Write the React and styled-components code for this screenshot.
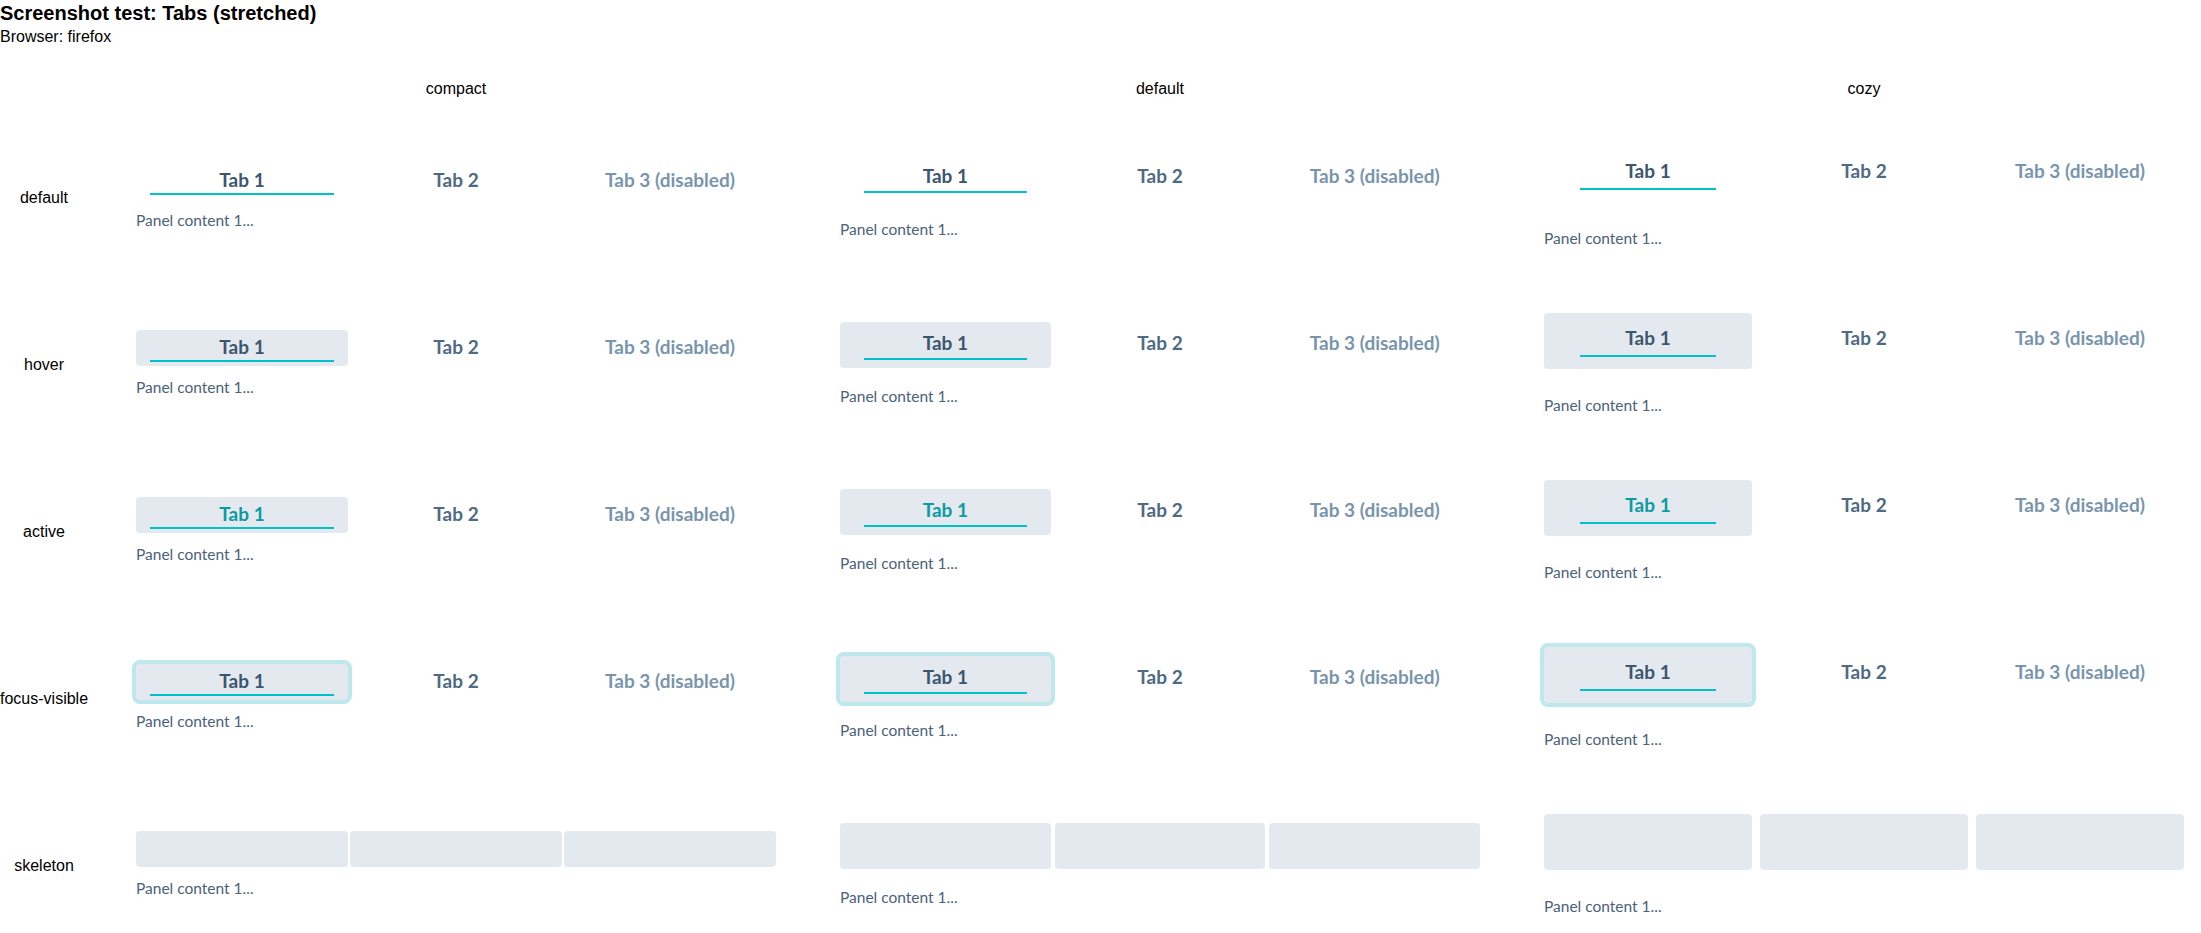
import React from "react";
import styled, { createGlobalStyle, css } from "styled-components";

const GlobalStyle = createGlobalStyle`
  html, body { margin: 0; padding: 0; background: #ffffff; }
  body { font-family: "Liberation Sans", Arial, sans-serif; color: #000000; }
`;

const DENSITY = {
  compact: { gap: 2, padX: 14, padTop: 5, lineGap: 1, padBottom: 4, panelGap: 11 },
  default: { gap: 4, padX: 24, padTop: 9, lineGap: 3, padBottom: 8, panelGap: 18 },
  cozy: { gap: 8, padX: 36, padTop: 13, lineGap: 5, padBottom: 12, panelGap: 26 },
};

const tabHeight = (d) => d.padTop + 24 + d.lineGap + 2 + d.padBottom;

const Page = styled.div`
  width: 2201px;
`;

const Title = styled.h1`
  margin: 0;
  padding-top: 2px;
  font-size: 20px;
  line-height: 23px;
  font-weight: 700;
`;

const Subtitle = styled.p`
  margin: 3px 0 0;
  font-size: 16px;
  line-height: 18px;
`;

const Matrix = styled.div`
  display: grid;
  grid-template-columns: 88px repeat(3, 656px);
  grid-template-rows: 67px repeat(5, 167px);
  column-gap: 48px;
`;

const ColumnHeading = styled.div`
  align-self: end;
  width: 640px;
  padding-bottom: 15px;
  font-size: 16px;
  line-height: 18px;
  text-align: center;
`;

const RowLabel = styled.div`
  align-self: center;
  margin-top: 3px;
  font-size: 16px;
  line-height: 18px;
  text-align: center;
  white-space: nowrap;
`;

const Cell = styled.div`
  align-self: center;
  width: 640px;
  display: flex;
  flex-direction: column;
`;

const TabList = styled.div`
  display: flex;
  gap: ${(p) => p.$d.gap}px;
`;

const Tab = styled.div`
  flex: 1 1 0;
  min-width: 0;
  box-sizing: border-box;
  display: flex;
  flex-direction: column;
  padding: ${(p) => p.$d.padTop}px ${(p) => p.$d.padX}px ${(p) => p.$d.padBottom}px;
  border-radius: 4px;
  font-family: Lato, "Noto Sans", sans-serif;
  font-weight: 700;
  font-size: 19px;
  line-height: 24px;
  text-align: center;
  color: ${(p) => (p.$disabled ? "#7995ad" : p.$selected ? "#3c566e" : "#4f6a83")};
  ${(p) =>
    p.$selected &&
    (p.$state === "hover" || p.$state === "active" || p.$state === "focus") &&
    css`
      background: #e3e9ef;
    `}
  ${(p) =>
    p.$selected &&
    p.$state === "active" &&
    css`
      color: #0b9ba1;
    `}
  ${(p) =>
    p.$selected &&
    p.$state === "focus" &&
    css`
      box-shadow: 0 0 0 4px #bde9ec;
    `}
`;

const TabLabel = styled.span`
  display: block;
  white-space: nowrap;
`;

const Indicator = styled.span`
  display: block;
  height: 2px;
  margin-top: ${(p) => p.$d.lineGap}px;
  background: ${(p) => (p.$on ? "#00c1cc" : "transparent")};
`;

const SkeletonTab = styled.div`
  flex: 1 1 0;
  height: ${(p) => tabHeight(p.$d)}px;
  border-radius: 4px;
  background: #e3e9ef;
`;

const Panel = styled.div`
  margin-top: ${(p) => p.$d.panelGap}px;
  font-family: Lato, "Noto Sans", sans-serif;
  font-size: 15.5px;
  line-height: 20px;
  color: #4c6279;
`;

const densities = ["compact", "default", "cozy"];
const states = [
  { key: "default", label: "default" },
  { key: "hover", label: "hover" },
  { key: "active", label: "active" },
  { key: "focus", label: "focus-visible" },
  { key: "skeleton", label: "skeleton" },
];

const tabs = [
  { label: "Tab 1", selected: true },
  { label: "Tab 2" },
  { label: "Tab 3 (disabled)", disabled: true },
];

function TabsDemo({ density, state }) {
  const d = DENSITY[density];
  return (
    <Cell>
      <TabList $d={d}>
        {state === "skeleton"
          ? tabs.map((t) => <SkeletonTab key={t.label} $d={d} />)
          : tabs.map((t) => (
              <Tab
                key={t.label}
                $d={d}
                $state={state}
                $selected={!!t.selected}
                $disabled={!!t.disabled}
              >
                <TabLabel>{t.label}</TabLabel>
                <Indicator $d={d} $on={!!t.selected} />
              </Tab>
            ))}
      </TabList>
      <Panel $d={d}>Panel content 1...</Panel>
    </Cell>
  );
}

export default function App() {
  return (
    <Page>
      <GlobalStyle />
      <Title>Screenshot test: Tabs (stretched)</Title>
      <Subtitle>Browser: firefox</Subtitle>
      <Matrix>
        <div />
        {densities.map((d) => (
          <ColumnHeading key={d}>{d}</ColumnHeading>
        ))}
        {states.map((s) => (
          <React.Fragment key={s.key}>
            <RowLabel>{s.label}</RowLabel>
            {densities.map((d) => (
              <TabsDemo key={d} density={d} state={s.key} />
            ))}
          </React.Fragment>
        ))}
      </Matrix>
    </Page>
  );
}
